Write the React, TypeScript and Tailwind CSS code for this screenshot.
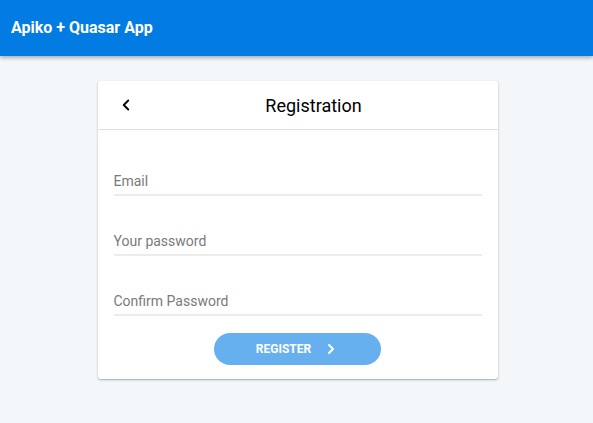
import { ChevronLeft, ChevronRight } from 'lucide-react';

const fields = ['Email', 'Your password', 'Confirm Password'];

export default function App() {
  return (
    <div className="min-h-[423px] bg-[#f4f7fa] font-['Roboto',sans-serif]">
      {/* Top bar */}
      <header className="h-[56px] bg-[#027be3] flex items-center px-[11px] shadow-[0_2px_4px_rgba(0,0,0,0.3)]">
        <div className="text-white font-bold text-[16px]">Apiko + Quasar App</div>
      </header>

      <div className="flex justify-center pt-[25px] pl-[2px]">
        <div className="w-[400px] bg-white rounded-[3px] shadow-[0_1px_3px_rgba(0,0,0,0.2),0_1px_1px_rgba(0,0,0,0.14)]">
          {/* Card header */}
          <div className="h-[49px] flex items-center border-b border-[#dde1e5]">
            <button className="w-[56px] flex justify-center text-black">
              <ChevronLeft size={18} strokeWidth={2.5} />
            </button>
            <div className="flex-1 text-center text-[18px] text-black pr-[24px]">Registration</div>
          </div>

          {/* Form */}
          <div className="px-[16px] pt-[18px] pb-[14px]">
            {fields.map((label) => (
              <div
                key={label}
                className="h-[48px] mb-[12px] flex items-end pb-[2px] border-b-[2px] border-[#ececec]"
              >
                <span className="text-[14px] text-[#7a7a7a]">{label}</span>
              </div>
            ))}
            <div className="flex justify-center pt-[5px]">
              <button className="w-[167px] h-[32px] rounded-full bg-[#67b0f0] text-white font-bold text-[12px] flex items-center justify-center gap-[12px]">
                <span>REGISTER</span>
                <ChevronRight size={16} strokeWidth={3} />
              </button>
            </div>
          </div>
        </div>
      </div>
    </div>
  );
}
